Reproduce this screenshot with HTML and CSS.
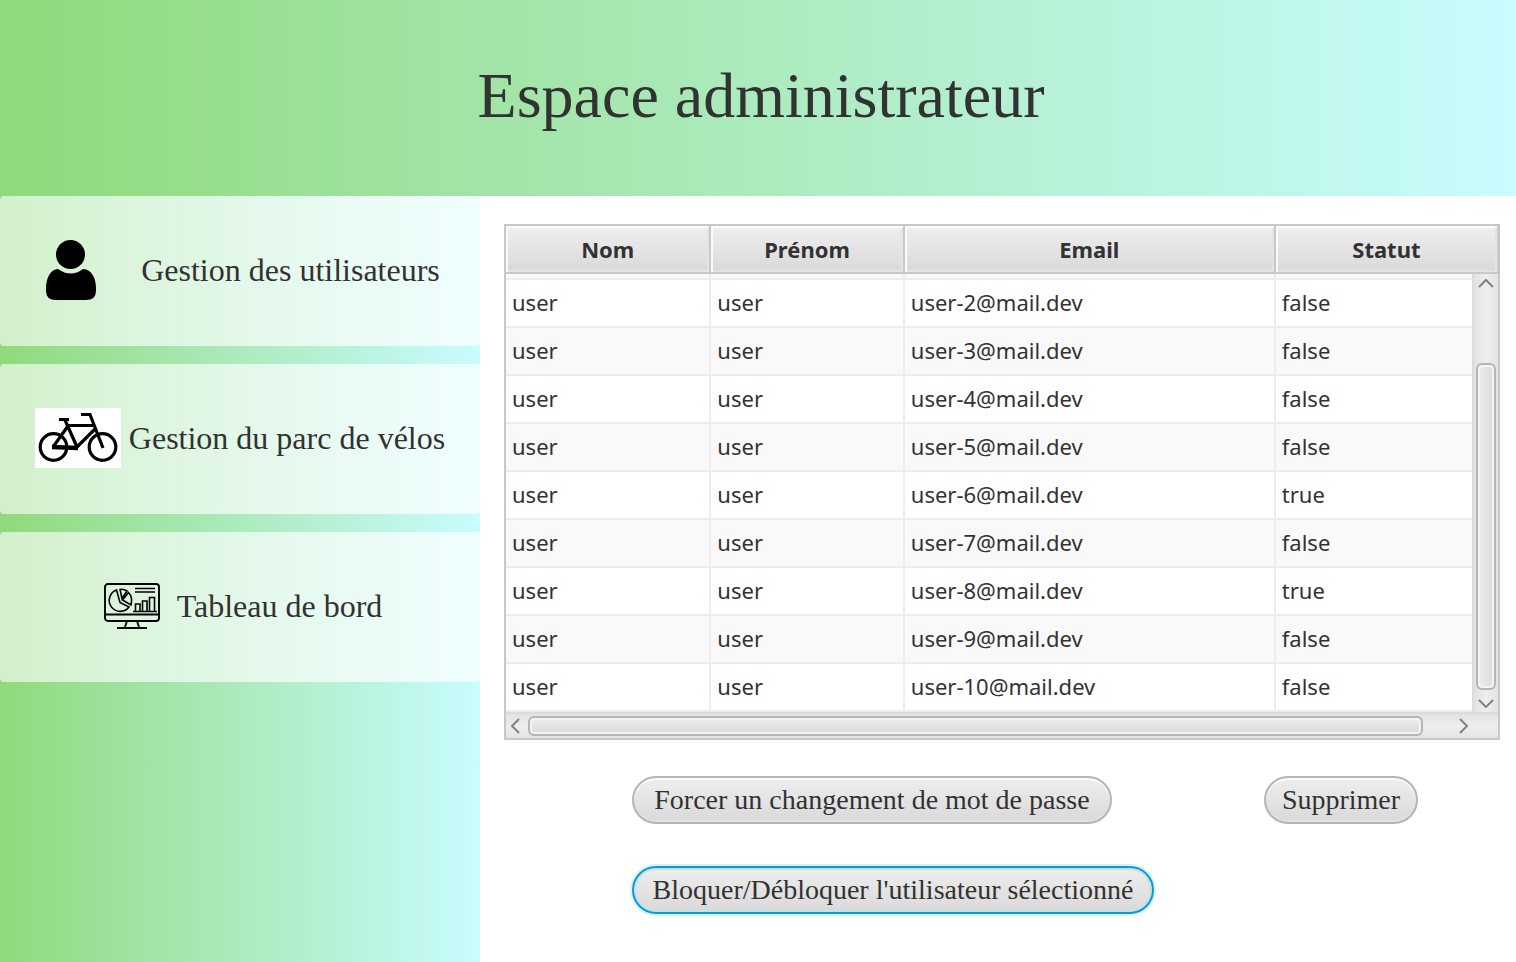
FILE: index.html
```html
<!DOCTYPE html>
<html lang="fr">
<head>
<meta charset="utf-8">
<title>Espace administrateur</title>
<link rel="stylesheet" href="styles.css">
</head>
<body>
<header class="banner"><h1>Espace administrateur</h1></header>
<div class="layout">
  <nav class="sidebar">
    <button class="nav-item nav-users" type="button">
      <svg class="icon-user" viewBox="0 0 50 60" aria-hidden="true"><circle cx="24.500" cy="14.500" r="14.500"/><path d="M12 29Q25 38 37 29C46 29 50 39 50 48V51Q50 60 40 60H10Q0 60 0 51V48C0 39 4 29 12 29Z"/></svg>
      <span>Gestion des utilisateurs</span>
    </button>
    <button class="nav-item nav-bikes" type="button">
      <svg class="icon-bike" viewBox="0 0 86 60" aria-hidden="true"><path fill="#fff" d="M0 0H86V60H0Z"/><g fill="none" stroke="#000" stroke-width="3.200"><circle cx="18.500" cy="39" r="13.300"/><circle cx="67.500" cy="39" r="13.300"/><path d="M24 11.500H34M30 12L42 39M32 17.500H59M46 6.500H55L68 40M33 18L18 39M60 21L42 39"/><path stroke-width="4.500" d="M17 39L43 40"/></g></svg>
      <span>Gestion du parc de vélos</span>
    </button>
    <button class="nav-item nav-board" type="button">
      <svg class="icon-board" viewBox="0 0 56 46" aria-hidden="true"><g fill="none" stroke="#000" stroke-width="1.900"><rect x="1" y="1" width="54" height="37" rx="3"/><path d="M1 31.500H55M23 38L21 44M33 38L35 44M13 45H43"/><path stroke-width="1.600" d="M31 5.500H51M31 9H51M29 28.500H53M31.500 28V21H36V28M38.500 28V18H43V28M45.500 28V14.500H50.500V28M12.500 7A11 11 0 1 0 25 24L16 19.500ZM16 6.500Q19 5.500 23 8L18 15.500ZM24.500 9.500Q29 14 27 22L18.500 17Z"/></g></svg>
      <span>Tableau de bord</span>
    </button>
  </nav>
  <main class="content">
    <div class="table-box">
      <table>
        <colgroup><col class="c-nom"><col class="c-prenom"><col class="c-email"><col></colgroup>
        <thead><tr><th>Nom</th><th>Prénom</th><th>Email</th><th>Statut</th></tr></thead>
        <tbody>
          <tr class="partial"><td></td><td></td><td></td><td></td></tr>
          <tr><td>user</td><td>user</td><td>user-2@mail.dev</td><td>false</td></tr>
          <tr><td>user</td><td>user</td><td>user-3@mail.dev</td><td>false</td></tr>
          <tr><td>user</td><td>user</td><td>user-4@mail.dev</td><td>false</td></tr>
          <tr><td>user</td><td>user</td><td>user-5@mail.dev</td><td>false</td></tr>
          <tr><td>user</td><td>user</td><td>user-6@mail.dev</td><td>true</td></tr>
          <tr><td>user</td><td>user</td><td>user-7@mail.dev</td><td>false</td></tr>
          <tr><td>user</td><td>user</td><td>user-8@mail.dev</td><td>true</td></tr>
          <tr><td>user</td><td>user</td><td>user-9@mail.dev</td><td>false</td></tr>
          <tr><td>user</td><td>user</td><td>user-10@mail.dev</td><td>false</td></tr>
        </tbody>
      </table>
      <div class="vbar">
        <svg class="arrow-v" viewBox="0 0 16 10" aria-hidden="true"><path d="M1 9L8 2L15 9"/></svg>
        <div class="vtrack"><div class="vthumb"></div></div>
        <svg class="arrow-v" viewBox="0 0 16 10" aria-hidden="true"><path d="M1 2L8 9L15 2"/></svg>
      </div>
      <div class="hbar">
        <svg class="arrow-h" viewBox="0 0 10 16" aria-hidden="true"><path d="M9 1L2 8L9 15"/></svg>
        <div class="htrack"><div class="hthumb"></div></div>
        <svg class="arrow-h" viewBox="0 0 10 16" aria-hidden="true"><path d="M1 1L8 8L1 15"/></svg>
      </div>
    </div>
    <div class="actions">
      <div class="action-row">
        <button class="pill pill-force" type="button">Forcer un changement de mot de passe</button>
        <button class="pill pill-delete" type="button">Supprimer</button>
      </div>
      <div class="action-row">
        <button class="pill pill-block" type="button">Bloquer/Débloquer l'utilisateur sélectionné</button>
      </div>
    </div>
  </main>
</div>
</body>
</html>
```
FILE: styles.css
```css
* { box-sizing: border-box; }
body {
  margin: 0;
  min-height: 100vh;
  display: flex;
  flex-direction: column;
  background: #fff;
  color: #323232;
  font-family: "Liberation Serif", serif;
}
button { font: inherit; color: inherit; margin: 0; white-space: nowrap; }
svg { flex: none; display: block; }

.banner {
  height: 196px;
  display: flex;
  align-items: center;
  justify-content: center;
  padding: 0 0 4px 6px;
  background: linear-gradient(to right, #90d97c, #c8fcff);
}
h1 { margin: 0; font-size: 64px; line-height: 74px; font-weight: 400; }

.layout { flex: 1; display: flex; }
.sidebar {
  flex: 0 0 480px;
  display: flex;
  flex-direction: column;
  gap: 18px;
  background: linear-gradient(to right, #90d97c, #c8fcff);
}
.nav-item {
  height: 150px;
  border: 0;
  border-radius: 4px;
  padding: 0 0 2px;
  display: flex;
  align-items: center;
  justify-content: center;
  background: linear-gradient(to right, rgba(255, 255, 255, 0.6), rgba(255, 255, 255, 0.72));
  font-size: 32px;
  line-height: 38px;
}
.nav-users { gap: 45px; padding-left: 6px; }
.nav-bikes { gap: 8px; }
.nav-board { gap: 17px; padding-left: 6px; }
.icon-user { width: 50px; height: 60px; }
.icon-bike { width: 86px; height: 60px; }
.icon-board { width: 56px; height: 46px; }

.content { flex: 1; min-width: 0; padding: 28px 16px 0 24px; }
.table-box { position: relative; border: 2px solid #c8c8c8; }
table {
  width: 100%;
  table-layout: fixed;
  border-collapse: separate;
  border-spacing: 0;
  font-family: "Noto Sans", sans-serif;
  font-size: 22px;
  line-height: 30px;
}
.c-nom { width: 20.7%; }
.c-prenom { width: 19.5%; }
.c-email { width: 37.4%; }
th {
  height: 48px;
  padding: 0;
  font-weight: 700;
  border-right: 2px solid #c8c8c8;
  border-bottom: 2px solid #c8c8c8;
  background: linear-gradient(#efefef, #d9d9d9);
  box-shadow: inset 2px 2px #fafafa, inset -2px -2px #e4e4e4;
}
th:last-child { border-right-width: 1px; }
td {
  height: 48px;
  padding: 0 6px 2px;
  border-right: 2px solid #ededed;
  border-bottom: 2px solid #ededed;
}
tbody tr:nth-child(odd) { background: #f9f9f9; }
.partial td { height: 6px; padding: 0; }

.vbar {
  position: absolute;
  top: 48px;
  right: 0;
  bottom: 26px;
  width: 26px;
  padding: 4px 2px 4px 2px;
  border-left: 2px solid #dcdcdc;
  display: flex;
  flex-direction: column;
  align-items: center;
  background: linear-gradient(to right, #e2e2e2, #eee, #e4e4e4);
}
.vtrack { flex: 1; align-self: stretch; display: flex; flex-direction: column; justify-content: flex-end; padding: 8px 0; }
.vthumb {
  height: 83%;
  border: 2px solid #b5b5b5;
  border-radius: 6px;
  background: linear-gradient(to right, #eee, #dadada);
  box-shadow: inset 0 0 0 2px #f4f4f4;
}
.hbar {
  height: 26px;
  padding: 2px 29px 2px 4px;
  border-top: 2px solid #dcdcdc;
  display: flex;
  align-items: center;
  background: linear-gradient(#e2e2e2, #eee, #e4e4e4);
}
.htrack { flex: 1; height: 20px; padding: 0 8px; }
.hthumb {
  width: 97%;
  height: 20px;
  border: 2px solid #b5b5b5;
  border-radius: 6px;
  background: linear-gradient(#eee, #dadada);
  box-shadow: inset 0 0 0 2px #f4f4f4;
}
.arrow-v { width: 16px; height: 10px; }
.arrow-h { width: 10px; height: 16px; }
.arrow-v path, .arrow-h path { fill: none; stroke: #828282; stroke-width: 2; }

.actions {
  display: flex;
  flex-direction: column;
  gap: 42px;
  padding: 36px 82px 48px 128px;
}
.action-row { display: flex; justify-content: space-between; }
.pill {
  height: 48px;
  padding: 0 16px;
  border: 2px solid #b5b5b5;
  border-radius: 24px;
  background: linear-gradient(#eee, #d9d9d9);
  box-shadow: inset 0 2px #fafafa, inset 0 -2px #e2e2e2;
  font-size: 28px;
  line-height: 32px;
}
.pill-force { min-width: 480px; }
.pill-delete { min-width: 154px; padding: 0 8px; }
.pill-block {
  min-width: 522px;
  border-color: #039ed3;
  box-shadow: 0 0 0 2px #d9f0f8, inset 0 0 0 2px #c9dfe6;
}
```
